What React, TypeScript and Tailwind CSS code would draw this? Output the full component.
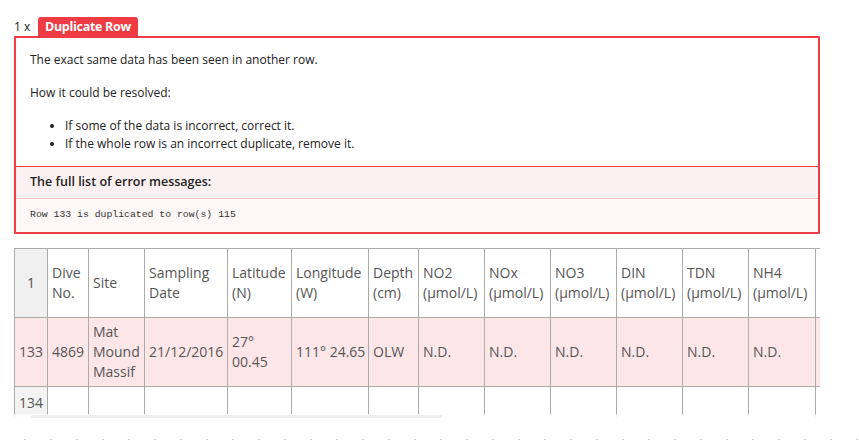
import React from "react";

const headers: string[][] = [
  ["Dive", "No."],
  ["Site"],
  ["Sampling", "Date"],
  ["Latitude", "(N)"],
  ["Longitude", "(W)"],
  ["Depth", "(cm)"],
  ["NO2", "(µmol/L)"],
  ["NOx", "(µmol/L)"],
  ["NO3", "(µmol/L)"],
  ["DIN", "(µmol/L)"],
  ["TDN", "(µmol/L)"],
  ["NH4", "(µmol/L)"],
  [],
];

const widths = [33, 41, 56, 83, 64, 77, 50, 66, 66, 66, 66, 66, 67, 70];

const row133: React.ReactNode[] = [
  "4869",
  <>Mat<br />Mound<br />Massif</>,
  "21/12/2016",
  <>27°<br />00.45</>,
  "111° 24.65",
  "OLW",
  "N.D.",
  "N.D.",
  "N.D.",
  "N.D.",
  "N.D.",
  "N.D.",
  "",
];

const dots = Array.from({ length: 34 });

export default function App() {
  const total = widths.reduce((a, b) => a + b, 0);
  return (
    <div className="w-[859px] h-[441px] bg-white overflow-hidden relative" style={{ fontFamily: '"Open Sans", "Noto Sans", sans-serif' }}>
      <div className="pl-[14px] pt-[17px] w-[820px]">
        <div className="flex items-end h-[19px]">
          <span className="text-[12px] leading-[16px] text-[#222] w-[24px] pb-[1px]">1 x</span>
          <span className="h-[19px] px-[7px] rounded-t-[3px] bg-[#ef3b44] text-white font-bold text-[12.5px] leading-[19px] tracking-[-0.3px]">Duplicate Row</span>
        </div>
        <div className="border-2 border-[#ef3b44] rounded-[1px] text-[12px] text-[#222]">
          <div className="px-[14px] pt-[13px] pb-[13px]">
            <p className="leading-[18px]">The exact same data has been seen in another row.</p>
            <p className="leading-[18px] mt-[15px]">How it could be resolved:</p>
            <ul className="list-disc pl-[35px] mt-[15px] leading-[18px]">
              <li>If some of the data is incorrect, correct it.</li>
              <li>If the whole row is an incorrect duplicate, remove it.</li>
            </ul>
          </div>
          <div className="border-t border-[#ef3b44] bg-[#fcf1f2] px-[14px] h-[32px] flex items-center font-semibold text-[12.5px]">
            The full list of error messages:
          </div>
          <div className="border-t border-[#f6c3c6] bg-[#fdf7f7] px-[14px] h-[34px] flex items-center text-[9.8px] text-[#333]" style={{ fontFamily: '"Liberation Mono", monospace' }}>
            Row 133 is duplicated to row(s) 115
          </div>
        </div>

        <div className="mt-[14px] relative overflow-hidden h-[170px] w-[806px]">
          <table className="table-fixed border-collapse text-[14px] leading-[20px] text-[#555]" style={{ width: total }}>
            <colgroup>
              {widths.map((w, i) => (
                <col key={i} style={{ width: w }} />
              ))}
            </colgroup>
            <tbody>
              <tr className="h-[69px]">
                <td className="border border-[#ababab] bg-[#f0f0f0] text-center align-middle">1</td>
                {headers.map((h, i) => (
                  <td key={i} className="border border-[#ababab] bg-white px-[4px] align-middle whitespace-nowrap">
                    {h.map((l, j) => (
                      <div key={j}>{l}</div>
                    ))}
                  </td>
                ))}
              </tr>
              <tr className="h-[69px] bg-[#fde6e8]">
                <td className="border border-[#ababab] text-center align-middle">133</td>
                {row133.map((c, i) => (
                  <td key={i} className="border border-[#ababab] px-[4px] align-middle whitespace-nowrap">{c}</td>
                ))}
              </tr>
              <tr className="h-[69px]">
                <td className="border border-[#ababab] bg-[#f3f3f3] text-center align-top pt-[6px]">134</td>
                {headers.map((_, i) => (
                  <td key={i} className="border border-[#ababab] bg-white"></td>
                ))}
              </tr>
            </tbody>
          </table>
          <div className="absolute left-0 right-0 top-[166px] h-[4px] bg-gradient-to-b from-white/60 to-white"></div>
          <div className="absolute left-[17px] w-[411px] top-[167px] h-[3px] bg-[#efefef]"></div>
        </div>
      </div>
      <div className="absolute left-0 top-[439px] flex gap-[24px] pl-[24px]">
        {dots.map((_, i) => (
          <span key={i} className="block w-[2px] h-[1px] bg-[#d0d0d0]"></span>
        ))}
      </div>
    </div>
  );
}
